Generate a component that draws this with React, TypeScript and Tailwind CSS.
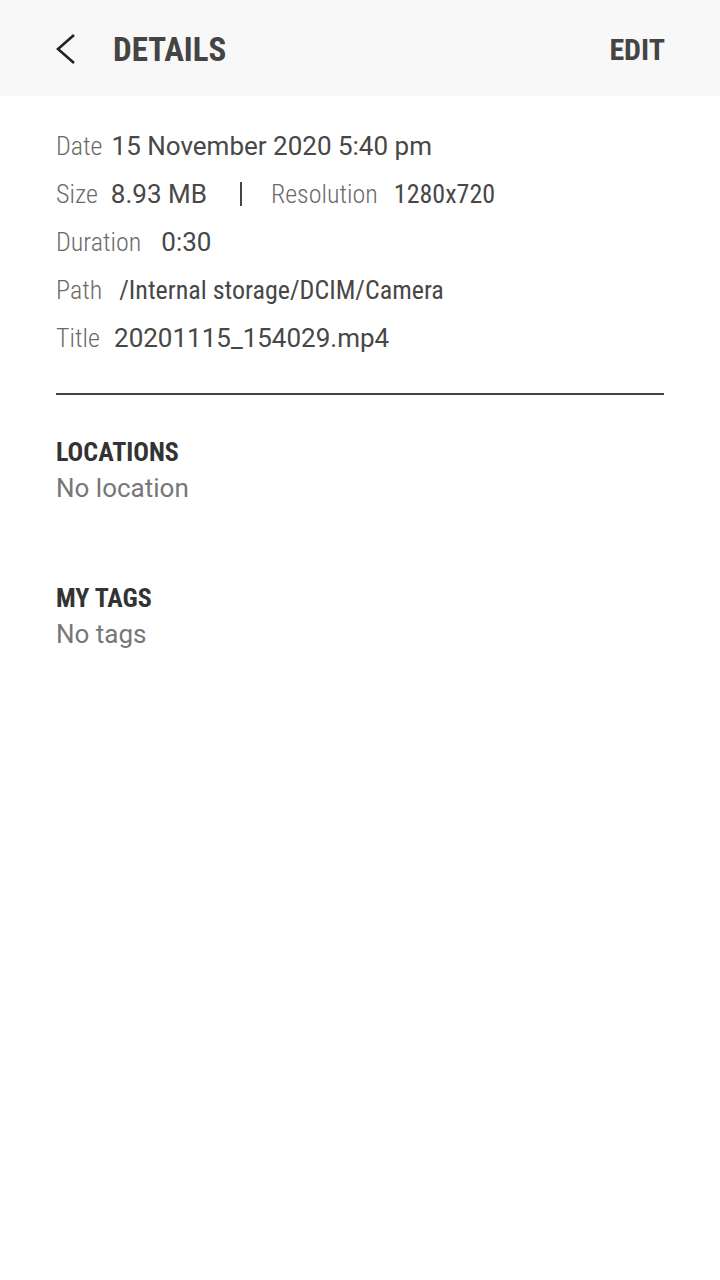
const cond = "font-['Roboto_Condensed',Roboto,sans-serif]";
const rob = "font-['Roboto',sans-serif]";

function Row({ label, children, gap }: { label: string; children: React.ReactNode; gap: string }) {
  return (
    <div className="flex h-12 items-center">
      <span className={`${cond} font-light text-[26px] text-[#6a6a6a]`}>{label}</span>
      <div className={`flex items-center ${gap}`}>{children}</div>
    </div>
  );
}

export default function App() {
  return (
    <div className="min-h-[1280px] bg-white">
      <header className="flex h-24 items-center bg-[#f8f8f8] pl-[56px] pr-[55px] pt-[3px]">
        <svg width="20" height="30" viewBox="0 0 20 30" className="shrink-0 -mt-[2px]">
          <polyline points="18,1 2,15 18,29" fill="none" stroke="#222" strokeWidth="2.6" strokeLinejoin="miter" />
        </svg>
        <h1 className={`${cond} ml-[37px] text-[33px] font-bold text-[#444]`}>DETAILS</h1>
        <div className="flex-1" />
        <span className={`${cond} text-[30px] font-bold text-[#444]`}>EDIT</span>
      </header>
      <main className="px-[56px] pt-[26px]">
        <Row label="Date" gap="ml-[9px]">
          <span className={`${rob} text-[26px] text-[#474747]`}>15 November 2020 5:40 pm</span>
        </Row>
        <Row label="Size" gap="ml-[13px]">
          <span className={`${rob} text-[26px] text-[#474747]`}>8.93 MB</span>
          <span className="ml-[33px] h-6 w-[2px] bg-[#444]" />
          <span className={`${cond} ml-[29px] font-light text-[26px] text-[#6a6a6a]`}>Resolution</span>
          <span className={`${cond} ml-[16px] text-[26px] text-[#474747]`}>1280x720</span>
        </Row>
        <Row label="Duration" gap="ml-[20px]">
          <span className={`${rob} text-[26px] text-[#474747]`}>0:30</span>
        </Row>
        <Row label="Path" gap="ml-[17px]">
          <span className={`${cond} text-[26px] text-[#474747]`}>/Internal storage/DCIM/Camera</span>
        </Row>
        <Row label="Title" gap="ml-[14px]">
          <span className={`${rob} text-[26px] text-[#474747]`}>20201115_154029.mp4</span>
        </Row>
        <div className="mt-[31px] h-[2px] bg-[#444]" />
        <section className="mt-[39px]">
          <h2 className={`${cond} text-[26px] font-bold leading-9 text-[#333]`}>LOCATIONS</h2>
          <p className={`${rob} text-[26px] leading-9 text-[#777]`}>No location</p>
        </section>
        <section className="mt-[74px]">
          <h2 className={`${cond} text-[26px] font-bold leading-9 text-[#333]`}>MY TAGS</h2>
          <p className={`${rob} text-[26px] leading-9 text-[#777]`}>No tags</p>
        </section>
      </main>
    </div>
  );
}
